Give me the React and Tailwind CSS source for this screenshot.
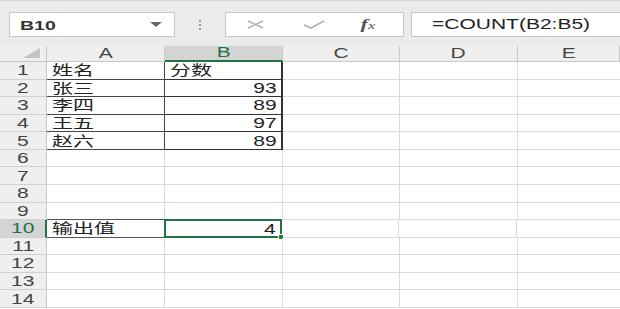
const font = { fontFamily: '"Liberation Sans", "Noto Sans CJK SC", sans-serif' };

const cols = ["A", "B", "C", "D", "E"];
const widths = ["w-[118px]", "w-[118px]", "w-[117px]", "w-[118px]", "flex-1"];

const data = {
  1: ["姓名", "分数"],
  2: ["张三", "93"],
  3: ["李四", "89"],
  4: ["王五", "97"],
  5: ["赵六", "89"],
  10: ["输出值", "4"],
};

// the screenshot is stretched sideways, so text is widened
function W({ children, o = "origin-center" }) {
  return <span className={`inline-block scale-x-150 ${o}`}>{children}</span>;
}

function Toolbar() {
  return (
    <div className="h-[46px] bg-[#ebebeb] border-t border-[#d8d8d8] flex items-start pt-[11px] pl-[9px]">
      <div className="w-[166px] h-[25px] bg-white border border-[#c6c6c6] flex items-center justify-between pl-[10px] pr-[12px]">
        <W o="origin-left">
          <span className="text-[13px] font-bold text-[#333]">B10</span>
        </W>
        <span className="w-0 h-0 border-l-[6px] border-r-[6px] border-t-[5px] border-l-transparent border-r-transparent border-t-[#666]" />
      </div>
      <div className="w-[50px] h-[25px] flex flex-col items-center justify-center gap-[2px]">
        <span className="w-[2px] h-[2px] bg-[#9a9a9a]" />
        <span className="w-[2px] h-[2px] bg-[#9a9a9a]" />
        <span className="w-[2px] h-[2px] bg-[#9a9a9a]" />
      </div>
      <div className="w-[179px] h-[25px] bg-white border border-[#c6c6c6] flex items-center">
        <svg width="17" height="9" viewBox="0 0 17 9" className="ml-[21px]">
          <path d="M1 1 L16 8 M16 1 L1 8" stroke="#b0b0b0" strokeWidth="1.4" fill="none" />
        </svg>
        <svg width="22" height="9" viewBox="0 0 22 9" className="ml-[39px]">
          <path d="M1 5 L8 8 L21 1" stroke="#b0b0b0" strokeWidth="1.5" fill="none" strokeLinejoin="round" />
        </svg>
        <span className="ml-[38px] text-[15px] italic text-[#555]" style={{ fontFamily: '"Liberation Serif", serif' }}>
          <W>
            <span className="font-bold">f</span>
            <span className="text-[11px]">x</span>
          </W>
        </span>
      </div>
      <div className="ml-[7px] flex-1 h-[25px] bg-white border border-[#c6c6c6] border-r-0 flex items-center pl-[20px]">
        <span className="text-[14px] text-[#222]">
          <W o="origin-left">=COUNT(B2:B5)</W>
        </span>
      </div>
    </div>
  );
}

function HeaderRow() {
  return (
    <div className="flex h-[16px] bg-[#efefef] text-[14px] text-[#444] leading-none">
      <div className="w-[47px] relative border-r border-b border-[#c8c8c8]">
        <span
          className="absolute right-[6px] bottom-[3px] w-0 h-0"
          style={{ borderBottom: "10px solid #c4c4c4", borderLeft: "17px solid transparent" }}
        />
      </div>
      {cols.map((c, i) => (
        <div
          key={c}
          className={`${widths[i]} flex items-end justify-center pb-[1px] border-r border-[#c8c8c8] ${
            c === "B" ? "bg-[#d4d4d4] border-b-2 border-b-[#217346] text-[#217346]" : "border-b border-b-[#c8c8c8]"
          }`}
        >
          <W>{c}</W>
        </div>
      ))}
    </div>
  );
}

function Row({ n }) {
  const vals = data[n] || [];
  const inTable = n >= 1 && n <= 5;
  const sel = n === 10;
  const isText = n === 1;
  return (
    <div className="flex h-[17.57px] text-[14px] leading-none">
      <div
        className={`w-[47px] flex items-center justify-center border-b border-[#d0d0d0] ${
          sel ? "bg-[#d4d4d4] text-[#217346] border-r-2 border-r-[#217346]" : "bg-[#efefef] text-[#444] border-r border-r-[#c8c8c8]"
        }`}
      >
        <W>{n}</W>
      </div>
      <div
        className={`w-[118px] flex items-center pl-[5px] text-[#222] border-r ${
          inTable ? "border-b border-[#444]" : sel ? "border-b border-b-[#555] border-r-[#dadada]" : "border-b border-[#dadada]"
        } ${sel ? "-mt-px border-t border-t-[#555]" : ""}`}
      >
        {vals[0] && <W o="origin-left">{vals[0]}</W>}
      </div>
      <div
        className={`w-[118px] relative flex items-center text-[#222] ${isText ? "justify-start pl-[5px]" : "justify-end pr-[4px]"} ${
          inTable
            ? "border-b border-r-2 border-[#333]"
            : sel
            ? "border-2 border-[#217346] -mt-px -ml-px h-[19px]"
            : "border-b border-r border-[#dadada]"
        }`}
      >
        {vals[1] && <W o={isText ? "origin-left" : "origin-right"}>{vals[1]}</W>}
        {sel && <span className="absolute -right-[4px] -bottom-[4px] w-[6px] h-[6px] bg-[#217346] border border-white" />}
      </div>
      <div className="w-[117px] border-b border-r border-[#dadada]" />
      <div className="w-[118px] border-b border-r border-[#dadada]" />
      <div className="flex-1 border-b border-[#dadada]" />
    </div>
  );
}

export default function App() {
  const rows = Array.from({ length: 14 }, (_, i) => i + 1);
  return (
    <div className="w-[620px] h-[309px] overflow-hidden bg-white" style={font}>
      <Toolbar />
      <HeaderRow />
      {rows.map((n) => (
        <Row key={n} n={n} />
      ))}
    </div>
  );
}
